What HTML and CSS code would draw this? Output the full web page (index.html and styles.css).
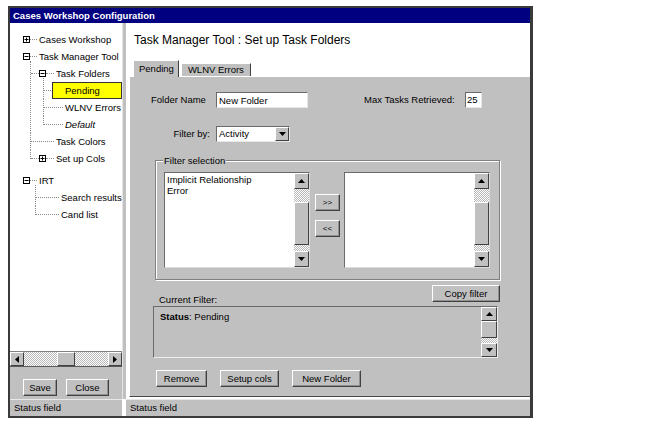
FILE: index.html
```html
<!DOCTYPE html>
<html lang="en">

<head>
    <meta charset="UTF-8" />
    <title>Cases Workshop Configuration</title>
    <link rel="stylesheet" href="styles.css">
</head>

<body>

    <div class="window">
        <div class="titlebar">Cases Workshop Configuration</div>

        <div class="main">
            <!-- Left: navigation tree -->
            <div class="left-pane">
                <ul class="tree">
                    <li>
                        <div class="node">
                            <svg class="exp" width="7" height="7" viewBox="0 0 7 7"><rect x=".5" y=".5" width="6" height="6" fill="#fff" stroke="#000"/><path d="M1.5 3.5h4M3.5 1.5v4" stroke="#000"/></svg>
                            <span class="dots dots-r"></span><span class="label">Cases Workshop</span>
                        </div>
                    </li>
                    <li>
                        <div class="node">
                            <svg class="exp" width="7" height="7" viewBox="0 0 7 7"><rect x=".5" y=".5" width="6" height="6" fill="#fff" stroke="#000"/><path d="M1.5 3.5h4" stroke="#000"/></svg>
                            <span class="dots dots-r"></span><span class="label">Task Manager Tool</span>
                        </div>
                        <ul class="sub sub-tmt">
                            <li>
                                <div class="node">
                                    <span class="dots dots-s"></span>
                                    <svg class="exp" width="7" height="7" viewBox="0 0 7 7"><rect x=".5" y=".5" width="6" height="6" fill="#fff" stroke="#000"/><path d="M1.5 3.5h4" stroke="#000"/></svg>
                                    <span class="dots dots-s"></span><span class="label">Task Folders</span>
                                </div>
                                <ul class="sub sub-tf">
                                    <li><div class="node"><span class="dots dots-m"></span><span class="label selected">Pending</span></div></li>
                                    <li><div class="node"><span class="dots dots-m"></span><span class="label">WLNV Errors</span></div></li>
                                    <li><div class="node"><span class="dots dots-m"></span><span class="label italic">Default</span></div></li>
                                </ul>
                            </li>
                            <li><div class="node"><span class="dots dots-l"></span><span class="label">Task Colors</span></div></li>
                            <li>
                                <div class="node">
                                    <span class="dots dots-s"></span>
                                    <svg class="exp" width="7" height="7" viewBox="0 0 7 7"><rect x=".5" y=".5" width="6" height="6" fill="#fff" stroke="#000"/><path d="M1.5 3.5h4M3.5 1.5v4" stroke="#000"/></svg>
                                    <span class="dots dots-s"></span><span class="label">Set up Cols</span>
                                </div>
                            </li>
                        </ul>
                    </li>
                    <li class="tree-gap">
                        <div class="node">
                            <svg class="exp" width="7" height="7" viewBox="0 0 7 7"><rect x=".5" y=".5" width="6" height="6" fill="#fff" stroke="#000"/><path d="M1.5 3.5h4" stroke="#000"/></svg>
                            <span class="dots dots-r"></span><span class="label">IRT</span>
                        </div>
                        <ul class="sub sub-irt">
                            <li><div class="node"><span class="dots dots-l"></span><span class="label">Search results</span></div></li>
                            <li><div class="node"><span class="dots dots-l"></span><span class="label">Cand list</span></div></li>
                        </ul>
                    </li>
                </ul>

                <div class="hscroll">
                    <div class="sb-btn sb-h"><svg width="4" height="7" viewBox="0 0 4 7"><path d="M4 0v7L0 3.5z"/></svg></div>
                    <div class="sb-track sb-track-h"><div class="sb-thumb-h"></div></div>
                    <div class="sb-btn sb-h"><svg width="4" height="7" viewBox="0 0 4 7"><path d="M0 0v7l4-3.5z"/></svg></div>
                </div>

                <div class="left-actions">
                    <button class="btn btn-save">Save</button>
                    <button class="btn btn-close">Close</button>
                </div>
            </div>

            <div class="splitter"></div>

            <!-- Right: folder setup -->
            <div class="right-pane">
                <h1>Task Manager Tool : Set up Task Folders</h1>

                <div class="tabs">
                    <div class="tab active">Pending</div>
                    <div class="tab">WLNV Errors</div>
                </div>

                <div class="panel">
                    <div class="row row-name">
                        <label class="lbl-name">Folder Name</label>
                        <input type="text" class="field field-name" value="New Folder" />
                        <label class="lbl-max">Max Tasks Retrieved:</label>
                        <input type="text" class="field field-max" value="25" />
                    </div>

                    <div class="row row-filter">
                        <label class="lbl-filter">Filter by:</label>
                        <div class="select">
                            <span>Activity</span>
                            <div class="drop"><svg width="7" height="4" viewBox="0 0 7 4"><path d="M0 0h7L3.5 4z"/></svg></div>
                        </div>
                    </div>

                    <div class="group">
                        <div class="group-title">Filter selection</div>
                        <div class="lists">
                            <div class="listbox">
                                <div class="list-body">Implicit Relationship<br>Error</div>
                                <div class="vscroll">
                                    <div class="sb-btn sb-v"><svg width="7" height="4" viewBox="0 0 7 4"><path d="M0 4h7L3.5 0z"/></svg></div>
                                    <div class="sb-track sb-gap-top"></div>
                                    <div class="sb-thumb"></div>
                                    <div class="sb-track sb-gap-bottom"></div>
                                    <div class="sb-btn sb-v"><svg width="7" height="4" viewBox="0 0 7 4"><path d="M0 0h7L3.5 4z"/></svg></div>
                                </div>
                            </div>
                            <div class="move-btns">
                                <button class="btn btn-move">&gt;&gt;</button>
                                <button class="btn btn-move">&lt;&lt;</button>
                            </div>
                            <div class="listbox">
                                <div class="list-body"></div>
                                <div class="vscroll">
                                    <div class="sb-btn sb-v"><svg width="7" height="4" viewBox="0 0 7 4"><path d="M0 4h7L3.5 0z"/></svg></div>
                                    <div class="sb-track sb-gap-top"></div>
                                    <div class="sb-thumb"></div>
                                    <div class="sb-track sb-gap-bottom"></div>
                                    <div class="sb-btn sb-v"><svg width="7" height="4" viewBox="0 0 7 4"><path d="M0 0h7L3.5 4z"/></svg></div>
                                </div>
                            </div>
                        </div>
                    </div>

                    <div class="current-head">
                        <span class="lbl-current">Current Filter:</span>
                        <button class="btn btn-copy">Copy filter</button>
                    </div>

                    <div class="current-box">
                        <div class="current-text"><b>Status</b>: Pending</div>
                        <div class="vscroll vscroll-small">
                            <div class="sb-btn sb-v2"><svg width="7" height="4" viewBox="0 0 7 4"><path d="M0 4h7L3.5 0z"/></svg></div>
                            <div class="sb-thumb sb-thumb-small"></div>
                            <div class="sb-track"></div>
                            <div class="sb-btn sb-v2"><svg width="7" height="4" viewBox="0 0 7 4"><path d="M0 0h7L3.5 4z"/></svg></div>
                        </div>
                    </div>

                    <div class="actions">
                        <button class="btn btn-remove">Remove</button>
                        <button class="btn btn-setup">Setup cols</button>
                        <button class="btn btn-new">New Folder</button>
                    </div>
                </div>
            </div>
        </div>

        <div class="statusbar">
            <div class="status">Status field</div>
            <div class="status-gap"></div>
            <div class="status">Status field</div>
        </div>
    </div>

</body>

</html>
```

FILE: styles.css
```css
body {
    margin: 0;
    background: #fff;
    color: #000;
    font: 9.5px/1.2 "Liberation Sans", Arial, sans-serif;
}

.window {
    margin: 6px 0 0 8px;
    width: 525px;
    height: 412px;
    box-sizing: border-box;
    border: 2px solid #3a3a3a;
    border-right-width: 3px;
    display: flex;
    flex-direction: column;
}

.titlebar {
    height: 15px;
    line-height: 15px;
    padding-left: 3px;
    background: #000080;
    color: #fff;
    font-weight: bold;
}

.main {
    flex: 1;
    display: grid;
    grid-template-columns: 112px 4px 1fr;
    min-height: 0;
}

/* ---------- left pane ---------- */

.left-pane {
    display: flex;
    flex-direction: column;
    min-height: 0;
}

.tree,
.tree ul {
    list-style: none;
    margin: 0;
    padding: 0;
}

.tree {
    flex: 1;
    padding-top: 8px;
    background: #fff;
    overflow: hidden;
}

.node {
    display: flex;
    align-items: center;
    height: 17px;
    white-space: nowrap;
}

.tree > li > .node {
    padding-left: 13px;
}

.tree .tree-gap {
    margin-top: 5px;
}

.exp {
    flex: none;
    display: block;
}

.dots {
    flex: none;
    height: 0;
    border-top: 1px dotted #8a8a8a;
}

.dots-r { width: 7px; }
.dots-s { width: 8px; }
.dots-m { width: 19px; }
.dots-l { width: 23px; }

.label {
    margin-left: 2px;
    line-height: 17px;
}

.label.italic {
    font-style: italic;
}

.label.selected {
    flex: 1;
    height: 17px;
    box-sizing: border-box;
    margin-left: -11px;
    padding-left: 12px;
    line-height: 15px;
    background: #ffff00;
    border: 1px solid #333;
}

.tree .sub > li {
    position: relative;
}

.tree .sub > li > .node {
    padding-left: 1px;
}

.tree .sub > li::before {
    content: "";
    position: absolute;
    left: 0;
    top: 0;
    bottom: 0;
    border-left: 1px dotted #8a8a8a;
}

.tree .sub > li:first-child::before {
    top: -4px;
}

.tree .sub > li:last-child::before {
    bottom: auto;
    height: 9px;
}

.tree .sub-tmt { margin-left: 20px; }
.tree .sub-tf { margin-left: 13px; }
.tree .sub-irt { margin-left: 25px; }

/* scrollbars */

.sb-btn {
    flex: none;
    box-sizing: border-box;
    background: #c0c0c0;
    border: 1px solid;
    border-color: #fff #404040 #404040 #fff;
    display: flex;
    align-items: center;
    justify-content: center;
}

.sb-track {
    background: repeating-conic-gradient(#fff 0 25%, #b8b8b8 0 50%) 0 0 / 2px 2px;
}

.hscroll {
    height: 14px;
    display: flex;
    border-top: 1px solid #808080;
}

.sb-h {
    width: 14px;
}

.sb-track-h {
    flex: 1;
    display: flex;
}

.sb-thumb-h {
    width: 18px;
    margin-left: 33px;
    box-sizing: border-box;
    background: #c0c0c0;
    border: 1px solid;
    border-color: #fff #404040 #404040 #fff;
}

.left-actions {
    flex: none;
    height: 33px;
    box-sizing: border-box;
    padding: 12px 0 0 13px;
    display: flex;
    align-items: flex-start;
    gap: 9px;
    background: #c0c0c0;
    border-top: 1px solid #5a5a5a;
}

.splitter {
    background: #c0c0c0;
    border-left: 1px solid #e4e4e4;
}

/* ---------- buttons / fields ---------- */

.btn {
    font: inherit;
    color: #000;
    height: 17px;
    padding: 0;
    box-sizing: border-box;
    background: #c0c0c0;
    border: 1px solid;
    border-color: #fff #404040 #404040 #fff;
    box-shadow: inset -1px -1px 0 #909090;
    text-align: center;
}

.btn-save { width: 34px; }
.btn-close { width: 43px; }
.btn-move { width: 25px; font-size: 8px; }
.btn-copy { width: 68px; }
.btn-remove { width: 51px; }
.btn-setup { width: 59px; }
.btn-new { width: 69px; }

.field {
    font: inherit;
    height: 16px;
    box-sizing: border-box;
    padding: 0 2px;
    margin: 0;
    background: #fff;
    border: 1px solid;
    border-color: #6a6a6a #e8e8e8 #e8e8e8 #6a6a6a;
}

/* ---------- right pane ---------- */

.right-pane {
    display: flex;
    flex-direction: column;
    background: #fff;
    min-height: 0;
}

h1 {
    margin: 9px 0 0 8px;
    font-size: 12px;
    font-weight: normal;
    line-height: 16px;
}

.tabs {
    margin-top: 12px;
    padding-left: 7px;
    display: flex;
    align-items: flex-end;
    gap: 2px;
}

.tab {
    box-sizing: border-box;
    height: 13px;
    line-height: 12px;
    padding: 0 6px;
    background: #c0c0c0;
    border: 1px solid;
    border-bottom: none;
    border-color: #fff #404040 #404040 #fff;
}

.tab.active {
    position: relative;
    height: 17px;
    line-height: 15px;
    padding: 0 4px 0 5px;
    margin-bottom: -1px;
}

.panel {
    flex: 1;
    margin: 0 0 2px 3px;
    background: #c0c0c0;
    border: 1px solid;
    border-color: #fff #404040 #4a4a4a #fff;
    border-right: none;
    min-height: 0;
}

.row {
    display: flex;
    align-items: center;
}

.row-name {
    margin-top: 15px;
    padding-left: 21px;
}

.lbl-name {
    width: 65px;
}

.field-name {
    width: 92px;
}

.lbl-max {
    margin: 0 6px 0 56px;
    width: 95px;
}

.field-max {
    width: 17px;
    padding: 0 1px;
    margin-top: -1px;
}

.row-filter {
    margin-top: 18px;
    padding-left: 21px;
}

.lbl-filter {
    width: 59px;
    padding-right: 6px;
    text-align: right;
}

.select {
    width: 74px;
    height: 16px;
    box-sizing: border-box;
    display: flex;
    align-items: center;
    background: #fff;
    border: 1px solid;
    border-color: #6a6a6a #e8e8e8 #e8e8e8 #6a6a6a;
}

.select span {
    flex: 1;
    padding-left: 2px;
}

.drop {
    width: 14px;
    height: 14px;
    box-sizing: border-box;
    background: #c0c0c0;
    border: 1px solid;
    border-color: #fff #404040 #404040 #fff;
    display: flex;
    align-items: center;
    justify-content: center;
}

/* group box */

.group {
    margin: 18px 0 0 25px;
    width: 345px;
    box-sizing: border-box;
    padding: 0 8px 11px;
    border: 1px solid #808080;
    box-shadow: 1px 1px 0 #fff, inset 1px 1px 0 #fff;
}

.group-title {
    width: fit-content;
    margin: -7px 0 0 -1px;
    padding: 0 1px;
    line-height: 13px;
    background: #c0c0c0;
}

.lists {
    margin-top: 5px;
    display: flex;
    align-items: flex-start;
}

.listbox {
    width: 146px;
    height: 96px;
    box-sizing: border-box;
    display: flex;
    background: #fff;
    border: 1px solid;
    border-color: #6a6a6a #dcdcdc #dcdcdc #6a6a6a;
}

.list-body {
    flex: 1;
    padding: 1px 2px;
    line-height: 11px;
}

.vscroll {
    width: 15px;
    display: flex;
    flex-direction: column;
}

.sb-v {
    height: 16px;
}

.sb-gap-top {
    height: 13px;
}

.sb-gap-bottom {
    height: 6px;
}

.sb-thumb {
    flex: 1;
    box-sizing: border-box;
    background: #c0c0c0;
    border: 1px solid;
    border-color: #fff #404040 #404040 #fff;
}

.move-btns {
    margin: 22px 4px 0 5px;
    display: flex;
    flex-direction: column;
    gap: 9px;
}

/* current filter */

.current-head {
    margin-top: 5px;
    padding: 0 30px 0 29px;
    display: flex;
    justify-content: space-between;
    align-items: flex-start;
}

.lbl-current {
    margin-top: 9px;
    line-height: 12px;
}

.current-box {
    margin-left: 23px;
    width: 345px;
    height: 52px;
    box-sizing: border-box;
    display: flex;
    border: 1px solid;
    border-color: #6a6a6a #eeeeee #eeeeee #6a6a6a;
}

.current-text {
    flex: 1;
    padding: 4px 6px;
    line-height: 12px;
}

.vscroll-small {
    width: 16px;
}

.sb-v2 {
    height: 14px;
}

.sb-thumb-small {
    flex: none;
    height: 17px;
}

.vscroll-small .sb-track {
    flex: 1;
}

.actions {
    margin-top: 12px;
    padding-left: 26px;
    display: flex;
    gap: 13px;
}

/* ---------- status bar ---------- */

.statusbar {
    flex: none;
    height: 17px;
    display: grid;
    grid-template-columns: 112px 4px 1fr;
}

.status {
    background: #c0c0c0;
    border-top: 1px solid #e8e8e8;
    padding-left: 4px;
    line-height: 16px;
}

.status-gap {
    background: #fff;
}
```
